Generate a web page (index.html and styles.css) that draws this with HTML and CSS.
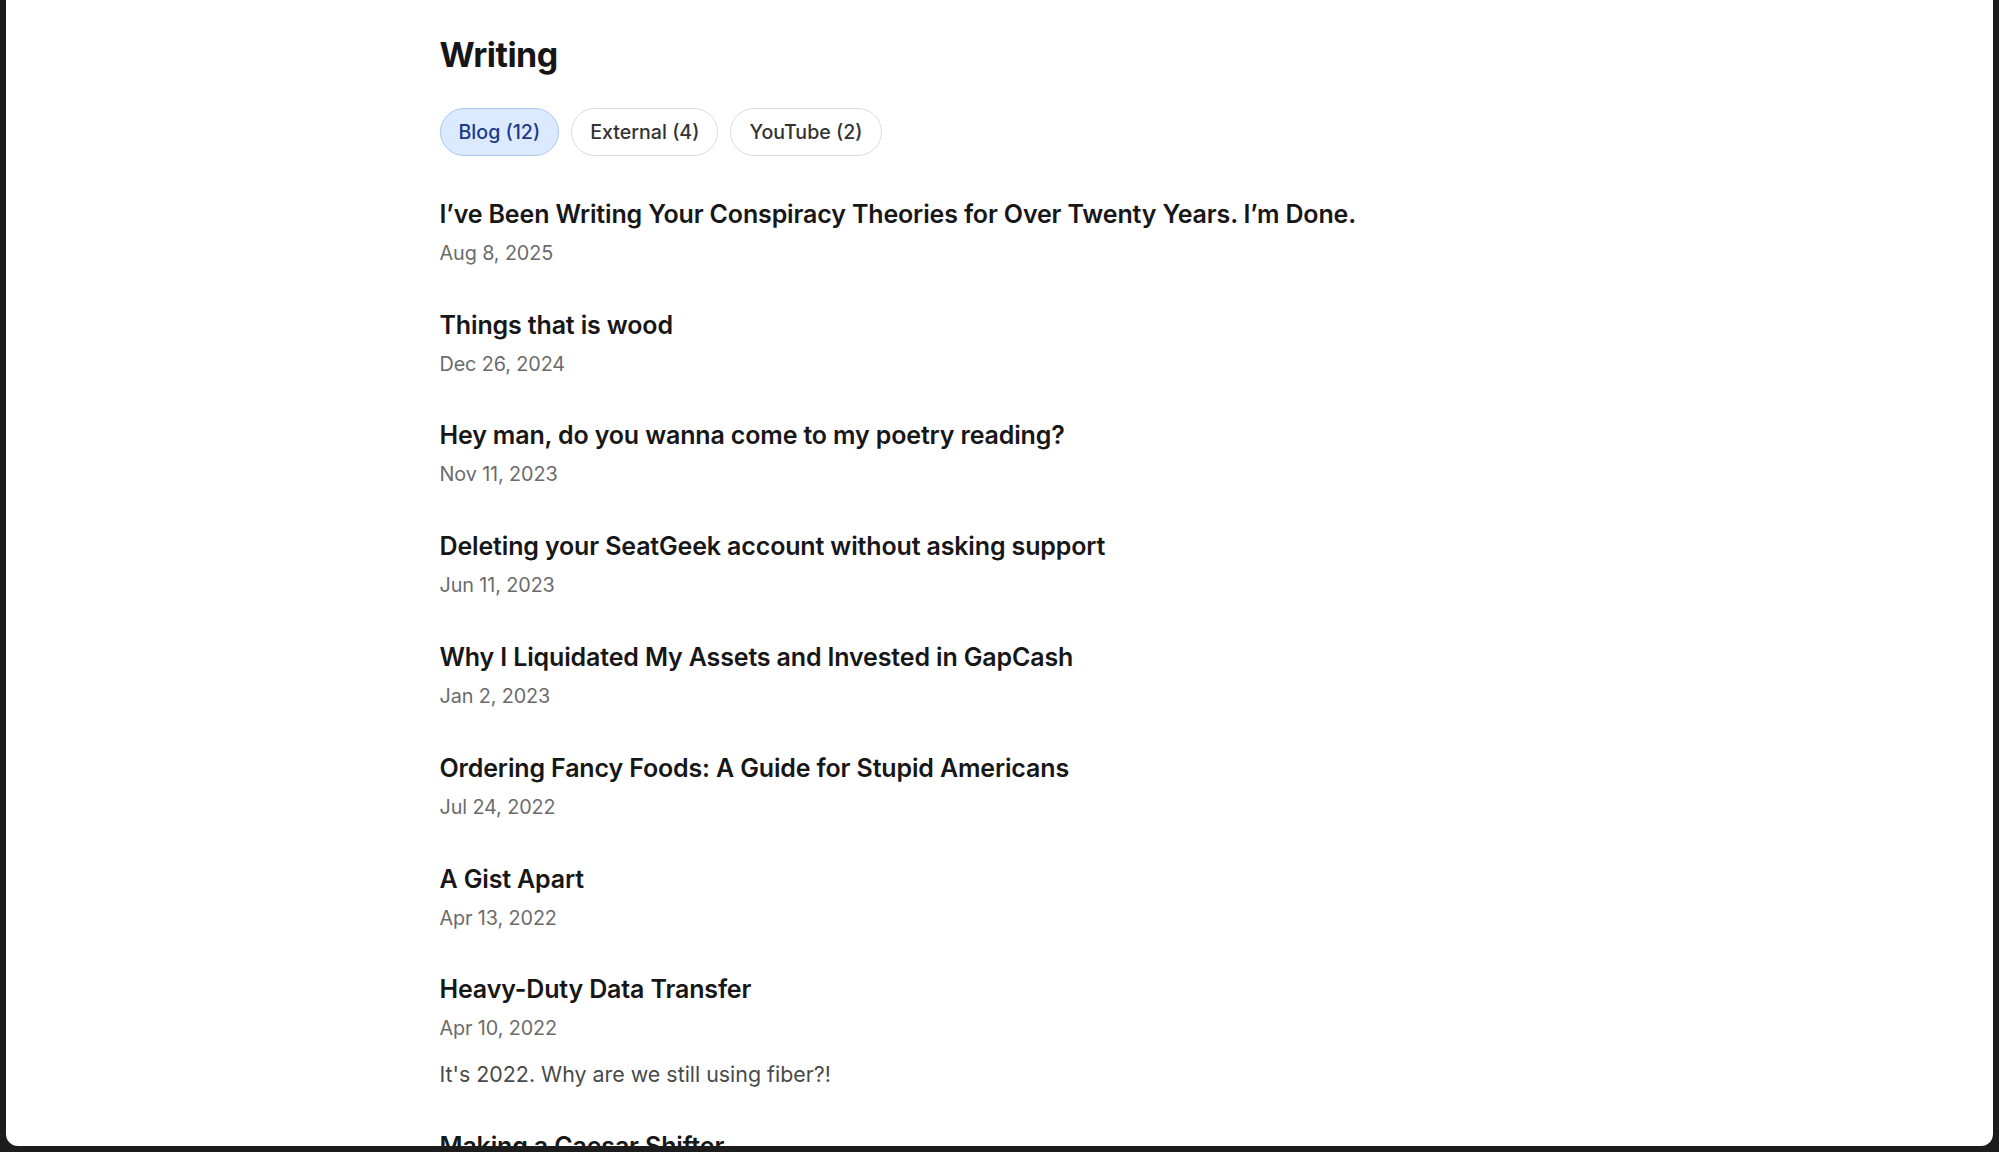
FILE: index.html
```html
<!DOCTYPE html>
<html lang="en">
<head>
<meta charset="utf-8">
<title>Writing</title>
<link rel="stylesheet" href="styles.css">
</head>
<body>
<div class="window">
  <main class="container">
    <h1 class="page-title">Writing</h1>
    <div class="tabs">
      <button class="tab tab-active">Blog (12)</button>
      <button class="tab">External (4)</button>
      <button class="tab">YouTube (2)</button>
    </div>
    <ul class="posts">
      <li class="post">
        <a class="post-title">I’ve Been Writing Your Conspiracy Theories for Over Twenty Years. I’m Done.</a>
        <div class="post-date">Aug 8, 2025</div>
      </li>
      <li class="post">
        <a class="post-title">Things that is wood</a>
        <div class="post-date">Dec 26, 2024</div>
      </li>
      <li class="post">
        <a class="post-title">Hey man, do you wanna come to my poetry reading?</a>
        <div class="post-date">Nov 11, 2023</div>
      </li>
      <li class="post">
        <a class="post-title">Deleting your SeatGeek account without asking support</a>
        <div class="post-date">Jun 11, 2023</div>
      </li>
      <li class="post">
        <a class="post-title">Why I Liquidated My Assets and Invested in GapCash</a>
        <div class="post-date">Jan 2, 2023</div>
      </li>
      <li class="post">
        <a class="post-title">Ordering Fancy Foods: A Guide for Stupid Americans</a>
        <div class="post-date">Jul 24, 2022</div>
      </li>
      <li class="post">
        <a class="post-title">A Gist Apart</a>
        <div class="post-date">Apr 13, 2022</div>
      </li>
      <li class="post">
        <a class="post-title">Heavy-Duty Data Transfer</a>
        <div class="post-date">Apr 10, 2022</div>
        <p class="post-desc">It's 2022. Why are we still using fiber?!</p>
      </li>
      <li class="post">
        <a class="post-title">Making a Caesar Shifter</a>
        <div class="post-date">Mar 1, 2022</div>
      </li>
    </ul>
  </main>
</div>
</body>
</html>
```

FILE: styles.css
```css
html, body {
  margin: 0;
  padding: 0;
  background: #1c1c1c;
  height: 100%;
  overflow: hidden;
}

.window {
  margin: 0 6px;
  height: 1146px;
  background: #ffffff;
  border-radius: 0 0 12px 12px;
  overflow: hidden;
  font-family: Inter, "Noto Sans", sans-serif;
  color: #171717;
}

.container {
  max-width: 1120px;
  margin: 0 auto;
  padding-top: 35px;
}

.page-title {
  margin: 0;
  font-size: 34px;
  font-weight: 700;
  line-height: 1.2;
  letter-spacing: -0.5px;
  color: #161616;
}

.tabs {
  display: flex;
  gap: 12px;
  margin-top: 32px;
}

.tab {
  font-family: inherit;
  font-size: 19.6px;
  font-weight: 500;
  height: 48px;
  padding: 0 18px;
  border-radius: 999px;
  border: 1.5px solid #dcdcdc;
  background: #ffffff;
  color: #333333;
  cursor: pointer;
}

.tab-active {
  background: #dbeafe;
  border-color: #a9c8f0;
  color: #1e3a8a;
}

.posts {
  list-style: none;
  margin: 40px 0 0;
  padding: 0;
  display: flex;
  flex-direction: column;
  gap: 37.8px;
}

.post-title {
  display: block;
  font-size: 25px;
  font-weight: 600;
  line-height: 36px;
  letter-spacing: -0.15px;
  color: #171717;
  text-decoration: none;
}

.post-date {
  margin-top: 6px;
  font-size: 19.8px;
  line-height: 31px;
  letter-spacing: -0.1px;
  color: #6b6b6b;
}

.post-desc {
  margin: 14px 0 0;
  font-size: 21.4px;
  line-height: 32px;
  color: #4a4a4a;
}
```
